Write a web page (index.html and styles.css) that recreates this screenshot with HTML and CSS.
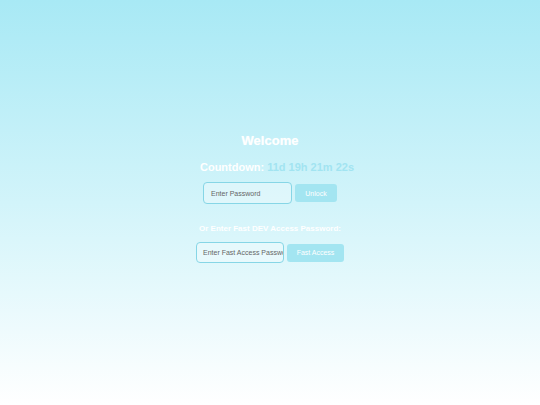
FILE: index.html
```html
<!DOCTYPE html>
<html lang="en">
<head>
<meta charset="utf-8">
<title>Welcome</title>
<link rel="stylesheet" href="styles.css">
</head>
<body>
<main class="gate">
  <h1 class="title">Welcome</h1>
  <p class="countdown">Countdown: <span class="timer">11d 19h 21m 22s</span></p>
  <form class="row row-main">
    <input class="field field-main" type="password" placeholder="Enter Password">
    <button class="btn btn-unlock" type="button">Unlock</button>
  </form>
  <p class="dev-label">Or Enter Fast DEV Access Password:</p>
  <form class="row row-dev">
    <input class="field field-dev" type="password" placeholder="Enter Fast Access Password">
    <button class="btn btn-fast" type="button">Fast Access</button>
  </form>
</main>
</body>
</html>
```
FILE: styles.css
```css
html, body {
  margin: 0;
  padding: 0;
  height: 100%;
}
body {
  background: linear-gradient(to bottom, #a8e9f5 0%, #d2f4fa 50%, #ffffff 100%);
  font-family: "Liberation Sans", Arial, sans-serif;
  color: #ffffff;
}
.gate {
  display: flex;
  flex-direction: column;
  align-items: center;
  padding-top: 133px;
}
.title {
  margin: 0;
  font-size: 13px;
  line-height: 16px;
  font-weight: bold;
  color: #ffffff;
  text-shadow: 0 0 1px rgba(255,255,255,0.6);
}
.countdown {
  margin: 12px 0 0;
  padding-left: 14px;
  font-size: 11px;
  line-height: 12px;
  font-weight: bold;
}
.timer {
  color: #a2e4f1;
}
.row {
  display: flex;
  align-items: center;
  gap: 3px;
  margin: 0;
}
.row-main {
  margin-top: 9px;
}
.row-dev {
  margin-top: 8px;
}
.field {
  box-sizing: border-box;
  border: 1px solid #86d6e6;
  border-radius: 4px;
  background: rgba(255,255,255,0.3);
  font-family: "Liberation Sans", Arial, sans-serif;
  font-size: 7px;
  color: #555;
  padding: 0 0 0 7px;
  outline: none;
}
.field::placeholder {
  color: #666666;
}
.field-main {
  width: 89px;
  height: 22px;
}
.field-dev {
  width: 88px;
  height: 21px;
  padding-left: 6px;
}
.btn {
  box-sizing: border-box;
  height: 18px;
  border: none;
  border-radius: 3px;
  background: #a3e5f1;
  color: #ffffff;
  font-family: "Liberation Sans", Arial, sans-serif;
  font-size: 7px;
  padding: 0;
}
.btn-unlock {
  width: 42px;
}
.btn-fast {
  width: 57px;
}
.dev-label {
  margin: 20px 0 0;
  font-size: 8px;
  line-height: 10px;
  font-weight: bold;
}
```
